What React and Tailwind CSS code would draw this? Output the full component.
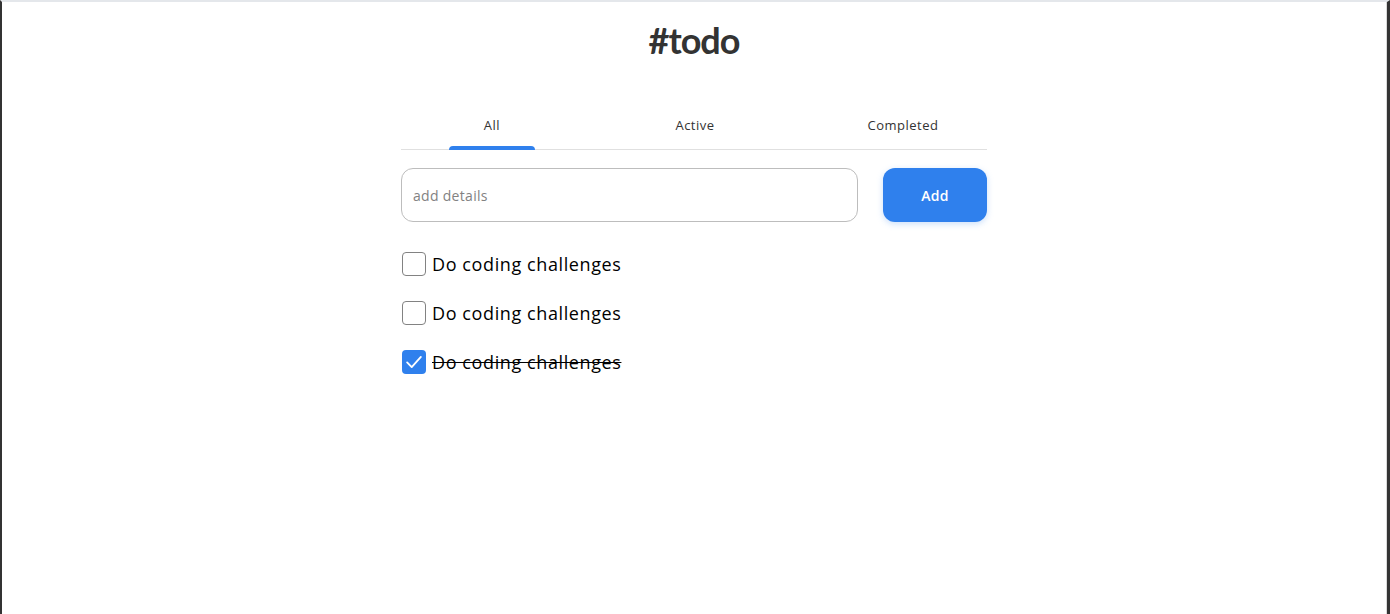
import { useState } from "react";

const tabs = [
  { id: "all", label: "All", cls: "w-[86px]" },
  { id: "active", label: "Active", cls: "ml-[137px] w-[46px]" },
  { id: "completed", label: "Completed", cls: "ml-[145px] w-[80px]" },
];

function Check() {
  return (
    <svg viewBox="0 0 24 24" className="w-[22px] h-[22px]" fill="none" stroke="white" strokeWidth="2" strokeLinecap="round" strokeLinejoin="round">
      <polyline points="4.5 12.5 9.5 17.5 19.5 6.5" />
    </svg>
  );
}

export default function App() {
  const [tab, setTab] = useState("all");
  const [todos, setTodos] = useState([
    { id: 1, text: "Do coding challenges", done: false },
    { id: 2, text: "Do coding challenges", done: false },
    { id: 3, text: "Do coding challenges", done: true },
  ]);

  function toggle(id) {
    setTodos(todos.map((t) => (t.id === id ? { ...t, done: !t.done } : t)));
  }

  return (
    <div className="h-[614px] w-[1390px] bg-white border-l-2 border-l-[#333] border-r-[3px] border-r-[#333] border-t-2 border-t-[#e4e7eb] overflow-hidden" style={{ fontFamily: "'Open Sans', 'Liberation Sans', sans-serif" }}>
      <div className="h-full border-r border-r-[#d9d9d9]">
        <div className="mx-auto w-[586px]">
          <h1 className="pt-[20px] text-center text-[36px] leading-[36px] font-bold text-[#333] tracking-[-1px]" style={{ fontFamily: "Lato, 'Open Sans', sans-serif" }}>
            #todo
          </h1>

          {/* Tabs */}
          <div className="mt-[42px] flex h-[50px] pl-[48px] border-b border-[#e0e0e0]">
            {tabs.map((t) => (
              <button key={t.id} onClick={() => setTab(t.id)} className={`relative h-full flex justify-center pt-[16px] text-[13px] leading-[18px] font-medium tracking-[0.5px] text-[#333] ${t.cls}`}>
                {t.label}
                {tab === t.id && <span className="absolute -bottom-px left-0 right-0 h-[4px] rounded-t-[4px] bg-[#2f80ed]" />}
              </button>
            ))}
          </div>

          {/* Input */}
          <div className="mt-[18px] flex gap-[25px]">
            <input placeholder="add details" className="w-[457px] h-[54px] rounded-xl border border-[#bdbdbd] px-[11px] text-[14px] tracking-[0.3px] text-[#333] placeholder:text-[#828282] outline-none" />
            <button className="w-[104px] h-[54px] rounded-xl bg-[#2f80ed] text-white text-[14px] font-semibold tracking-[0.3px] shadow-[0_2px_6px_rgba(127,177,243,0.4)]">
              Add
            </button>
          </div>

          {/* List */}
          <ul className="mt-[30px] flex flex-col gap-[25px]">
            {todos.map((t) => (
              <li key={t.id} className="flex items-center h-[24px]">
                <button onClick={() => toggle(t.id)} className={`ml-px w-[24px] h-[24px] rounded-[4px] flex items-center justify-center ${t.done ? "bg-[#2f80ed]" : "border border-[#828282]"}`}>
                  {t.done && <Check />}
                </button>
                <span className={`ml-[6px] text-[18px] leading-[24px] tracking-[0.6px] text-black ${t.done ? "line-through text-[#333]" : ""}`}>{t.text}</span>
              </li>
            ))}
          </ul>
        </div>
      </div>
    </div>
  );
}
